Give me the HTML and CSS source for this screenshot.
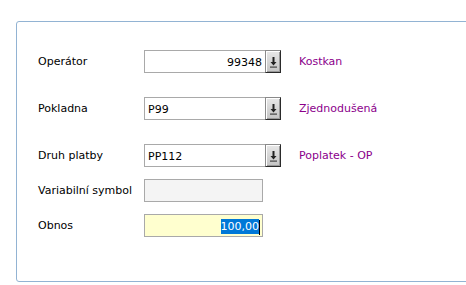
FILE: index.html
```html
<!DOCTYPE html>
<html lang="cs">
<head>
  <meta charset="UTF-8" />
  <title>Platba</title>
  <link rel="stylesheet" href="styles.css">
</head>
<body>

  <div class="panel">
    <div class="row row-combo">
      <label class="label">Operátor</label>
      <div class="combo">
        <div class="field align-right">99348</div>
        <span class="drop-btn">
          <svg width="7" height="11" viewBox="0 0 7 11"><path d="M2.5 0h2v5h2l-3 3.5-3-3.5h2z" fill="#222"/><rect x="0" y="9.5" width="7" height="1.2" fill="#444"/></svg>
        </span>
      </div>
      <span class="desc">Kostkan</span>
    </div>

    <div class="row row-combo">
      <label class="label">Pokladna</label>
      <div class="combo">
        <div class="field">P99</div>
        <span class="drop-btn">
          <svg width="7" height="11" viewBox="0 0 7 11"><path d="M2.5 0h2v5h2l-3 3.5-3-3.5h2z" fill="#222"/><rect x="0" y="9.5" width="7" height="1.2" fill="#444"/></svg>
        </span>
      </div>
      <span class="desc">Zjednodušená</span>
    </div>

    <div class="row">
      <label class="label">Druh platby</label>
      <div class="combo">
        <div class="field">PP112</div>
        <span class="drop-btn">
          <svg width="7" height="11" viewBox="0 0 7 11"><path d="M2.5 0h2v5h2l-3 3.5-3-3.5h2z" fill="#222"/><rect x="0" y="9.5" width="7" height="1.2" fill="#444"/></svg>
        </span>
      </div>
      <span class="desc">Poplatek - OP</span>
    </div>

    <div class="row">
      <label class="label">Variabilní symbol</label>
      <div class="field field-plain disabled"></div>
    </div>

    <div class="row">
      <label class="label">Obnos</label>
      <div class="field field-plain amount align-right"><span class="selected">100,00</span><span class="caret"></span></div>
    </div>
  </div>

</body>
</html>
```

FILE: styles.css
```css
* {
  box-sizing: border-box;
}

body {
  margin: 0;
  padding: 0;
  background: #fff;
  font-family: 'DejaVu Sans', Verdana, sans-serif;
  font-size: 11px;
  color: #000;
}

.panel {
  margin: 21px 0 0 16px;
  width: 470px;
  height: 261px;
  border: 1px solid #92b3d3;
  border-radius: 3px;
  padding: 28px 0 0 21px;
}

.row {
  display: flex;
  align-items: center;
  height: 23px;
  margin-bottom: 12px;
}

.row-combo {
  margin-bottom: 24px;
}

.label {
  width: 106px;
  margin-top: -1px;
}

.combo {
  display: flex;
  height: 23px;
}

.field {
  width: 121px;
  height: 23px;
  border: 1px solid #a9a9a9;
  border-right: none;
  padding: 1px 3px 0;
  line-height: 21px;
  white-space: nowrap;
}

.field-plain {
  width: 119px;
  border-right: 1px solid #a9a9a9;
}

.align-right {
  text-align: right;
}

.drop-btn {
  width: 16px;
  height: 23px;
  display: flex;
  align-items: center;
  justify-content: center;
  padding-top: 1px;
  background: linear-gradient(#e8e8e8, #c4c4c4);
  border: 1px solid #2a2a2a;
  border-top-color: #8a8a8a;
  border-left-color: #8a8a8a;
  box-shadow: inset 1px 1px 0 #fff, inset -1px -1px 0 #999;
}

.desc {
  margin-left: 18px;
  margin-top: -1px;
  color: #8b008b;
}

.disabled {
  background: #f4f4f4;
}

.amount {
  background: #ffffcf;
  padding-right: 2px;
}

.selected {
  background: #0078d7;
  color: #fff;
  padding: 1px 0;
}

.caret {
  display: inline-block;
  width: 1px;
  height: 15px;
  background: #000;
  vertical-align: middle;
}
```
